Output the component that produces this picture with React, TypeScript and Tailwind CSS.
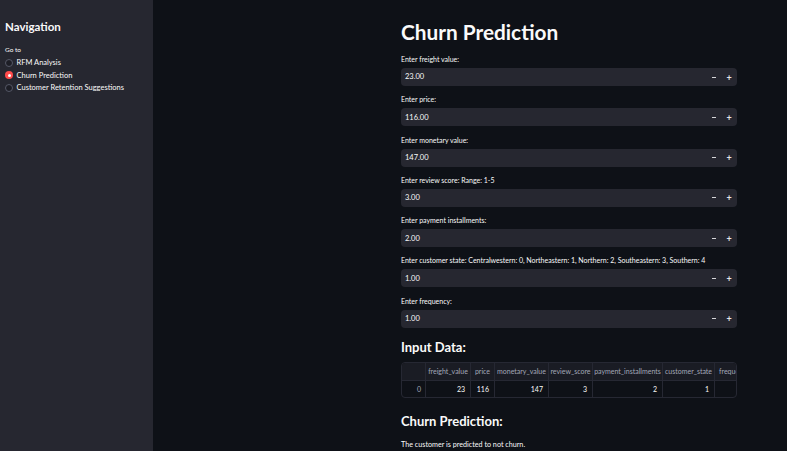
const fields = [
  { label: 'Enter freight value:', value: '23.00' },
  { label: 'Enter price:', value: '116.00' },
  { label: 'Enter monetary value:', value: '147.00' },
  { label: 'Enter review score: Range: 1-5', value: '3.00' },
  { label: 'Enter payment installments:', value: '2.00' },
  {
    label:
      'Enter customer state: Centralwestern: 0, Northeastern: 1, Northern: 2, Southeastern: 3, Southern: 4',
    value: '1.00',
  },
  { label: 'Enter frequency:', value: '1.00' },
];

const columns = [
  { name: 'freight_value', w: 'w-[45px]', v: '23' },
  { name: 'price', w: 'w-[24px]', v: '116' },
  { name: 'monetary_value', w: 'w-[54px]', v: '147' },
  { name: 'review_score', w: 'w-[44px]', v: '3' },
  { name: 'payment_installments', w: 'w-[70px]', v: '2' },
  { name: 'customer_state', w: 'w-[52px]', v: '1' },
  { name: 'frequency', w: 'w-[40px]', v: '1' },
];

const pages = ['RFM Analysis', 'Churn Prediction', 'Customer Retention Suggestions'];

function NumberInput({ label, value }: { label: string; value: string }) {
  return (
    <div className="mb-[8.3px]">
      <div className="h-[10px] mb-[4px] text-[7px] leading-[10px] text-[#fafafa] whitespace-nowrap">{label}</div>
      <div className="h-[18px] rounded-[4px] bg-[#262730] flex items-center pl-[4px] pr-[1px]">
        <span className="flex-1 text-[7.5px] text-[#fafafa]">{value}</span>
        <span className="w-[16px] flex justify-center">
          <span className="block w-[4px] h-[1px] bg-[#d6d6d9]" />
        </span>
        <span className="w-[14px] flex justify-center text-[9px] leading-none font-bold text-[#e6e6ea]">+</span>
      </div>
    </div>
  );
}

export default function App() {
  return (
    <div
      className="w-[787px] h-[451px] flex overflow-hidden bg-[#0e1117] text-[#fafafa]"
      style={{ fontFamily: 'Lato, "Liberation Sans", sans-serif' }}
    >
      {/* Sidebar */}
      <aside className="w-[153px] shrink-0 bg-[#262730] px-[5px] pt-[19px]">
        <h2 className="text-[11.5px] font-bold leading-[16px]">Navigation</h2>
        <div className="mt-[11px] text-[6.5px] leading-[8px] text-[#fafafa]">Go to</div>
        <div className="mt-[4px] flex flex-col gap-[3.5px]">
          {pages.map((p, i) => (
            <div key={p} className="flex items-center gap-[3.5px] h-[9px]">
              {i === 1 ? (
                <span className="w-[8px] h-[8px] rounded-full bg-[#ff4b4b] flex items-center justify-center">
                  <span className="w-[3px] h-[3px] rounded-full bg-white" />
                </span>
              ) : (
                <span className="w-[8px] h-[8px] rounded-full border border-[#555867] bg-[#1d1e26]" />
              )}
              <span className="text-[7.5px] leading-[9px] text-[#fafafa]">{p}</span>
            </div>
          ))}
        </div>
      </aside>

      {/* Main */}
      <main className="flex-1 pl-[248px] pr-[50px] pt-[20px]">
        <div className="w-[336px]">
          <h1 className="text-[20.8px] font-bold leading-[24px] mb-[10px]">Churn Prediction</h1>
          {fields.map((f) => (
            <NumberInput key={f.label} label={f.label} value={f.value} />
          ))}

          <h3 className="mt-[10px] text-[13px] font-bold leading-[18px]">Input Data:</h3>
          <div className="mt-[6px] w-[336px] rounded-[4px] border border-[#262833] overflow-hidden text-[7px]">
            <div className="flex h-[18px] bg-[#1a1c24] border-b border-[#262833]">
              <div className="w-[24px] shrink-0 border-r border-[#262833]" />
              {columns.map((c) => (
                <div
                  key={c.name}
                  className={`${c.w} shrink-0 border-r border-[#262833] flex items-center justify-center overflow-hidden whitespace-nowrap text-[#a3a8b8]`}
                >
                  {c.name}
                </div>
              ))}
            </div>
            <div className="flex h-[16px]">
              <div className="w-[24px] shrink-0 border-r border-[#262833] flex items-center justify-end pr-[4px] text-[#a3a8b8]">
                0
              </div>
              {columns.map((c) => (
                <div
                  key={c.name}
                  className={`${c.w} shrink-0 border-r border-[#262833] flex items-center justify-end pr-[5px] text-[#fafafa]`}
                >
                  {c.name === 'frequency' ? '' : c.v}
                </div>
              ))}
            </div>
          </div>

          <h3 className="mt-[14px] text-[13px] font-bold leading-[18px]">Churn Prediction:</h3>
          <p className="mt-[10px] text-[7.2px] leading-[10px]">The customer is predicted to not churn.</p>
        </div>
      </main>
    </div>
  );
}
